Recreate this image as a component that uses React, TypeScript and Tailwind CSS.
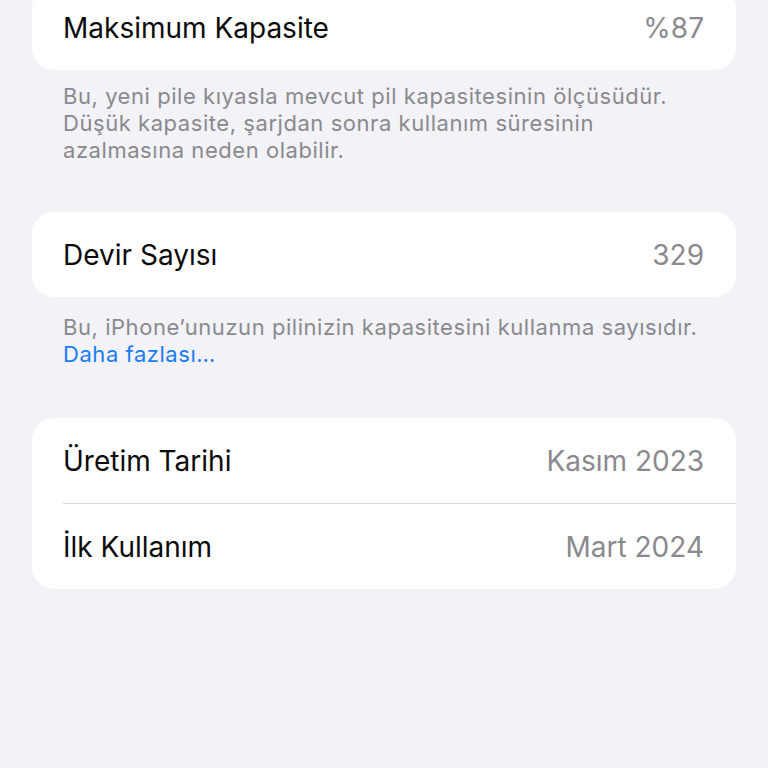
import React from "react"

type Row = { label: string; value: string }

function Card({ rows, className = "" }: { rows: Row[]; className?: string }) {
  return (
    <div className={`mx-[32px] overflow-hidden rounded-[22px] bg-white ${className}`}>
      {rows.map((row, i) => (
        <div key={row.label}>
          {i > 0 && <div className="ml-[31px] h-px bg-[#d8d8dc]" />}
          <div className="flex h-[85px] items-center justify-between pl-[31px] pr-[32px] pt-[1px]">
            <span className="text-[28px] leading-none text-[#0b0b0b]">{row.label}</span>
            <span className="text-[28px] leading-none text-[#8a8a8e]">{row.value}</span>
          </div>
        </div>
      ))}
    </div>
  )
}

export default function App() {
  return (
    <div
      className="h-[768px] w-[768px] overflow-hidden bg-[#f2f2f7]"
      style={{ fontFamily: "Inter, 'Noto Sans', sans-serif" }}
    >
      {/* Maksimum kapasite */}
      <Card rows={[{ label: "Maksimum Kapasite", value: "%87" }]} className="-mt-[15px]" />
      <p className="whitespace-nowrap pl-[63px] pt-[13px] text-[22px] leading-[27px] tracking-[0.55px] text-[#8a8a8e]">
        Bu, yeni pile kıyasla mevcut pil kapasitesinin ölçüsüdür.
        <br />
        Düşük kapasite, şarjdan sonra kullanım süresinin
        <br />
        azalmasına neden olabilir.
      </p>

      {/* Devir sayısı */}
      <Card rows={[{ label: "Devir Sayısı", value: "329" }]} className="mt-[48px]" />
      <p className="whitespace-nowrap pl-[63px] pt-[17px] text-[22px] leading-[27px] tracking-[0.55px] text-[#8a8a8e]">
        Bu, iPhone’unuzun pilinizin kapasitesini kullanma sayısıdır.
        <br />
        <span className="text-[#1a7cf2]">Daha fazlası…</span>
      </p>

      {/* Tarihler */}
      <Card
        rows={[
          { label: "Üretim Tarihi", value: "Kasım 2023" },
          { label: "İlk Kullanım", value: "Mart 2024" },
        ]}
        className="mt-[50px]"
      />
    </div>
  )
}
